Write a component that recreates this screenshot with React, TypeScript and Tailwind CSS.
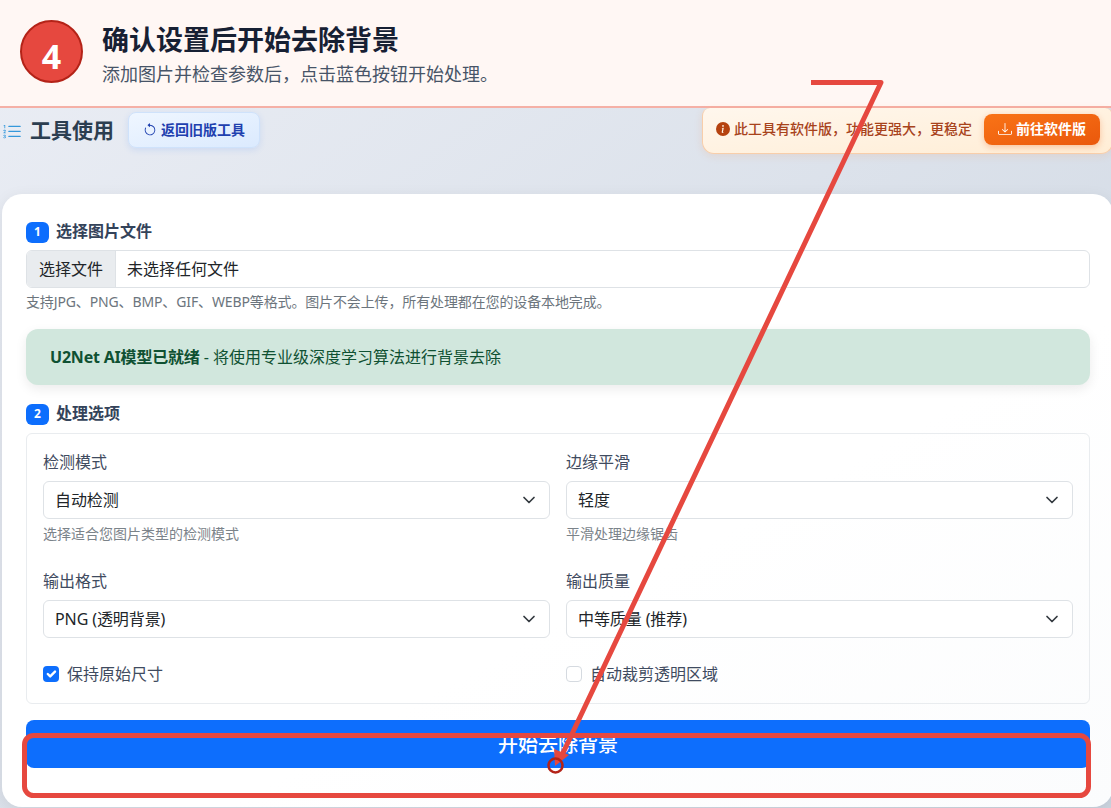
import React from 'react'
import { BsArrowCounterclockwise, BsDownload, BsInfoCircleFill, BsListOl } from 'react-icons/bs'

interface ISectionTitle {
    step: number
    text: string
}

interface ISelectField {
    label: string
    value: string
    help?: string
}

interface ICheckField {
    label: string
    checked?: boolean
}

function SectionTitle({ step, text }: ISectionTitle) {
    return (
        <h2 className="flex h-6 items-center gap-[7px] font-bold leading-6 text-[#34435a]">
            <span className="mt-0.5 flex h-[21px] w-[23px] items-center justify-center rounded-md bg-[#0d6efd] text-xs font-bold text-white">
                {step}
            </span>
            <span>{text}</span>
        </h2>
    )
}

function SelectField({ label, value, help }: ISelectField) {
    return (
        <div className="flex flex-col">
            <span className="h-6 leading-6 text-[#3f4b60]">{label}</span>
            <button
                type="button"
                className="mt-[7px] flex h-[38px] items-center justify-between rounded-md border border-[#dee2e6] bg-white pl-[11px] pr-3 text-left text-[#212529]"
            >
                <span className="tracking-[-0.1px]">{value}</span>
                <svg width="16" height="12" viewBox="0 0 16 12" fill="none">
                    <path
                        d="m3 3.5 5 5 5-5"
                        stroke="#343a40"
                        strokeWidth="1.7"
                        strokeLinecap="round"
                        strokeLinejoin="round"
                    />
                </svg>
            </button>
            {
                help && (
                    <span className="mt-1 h-[21px] text-sm leading-[21px] text-[#7b838a]">
                        {help}
                    </span>
                )
            }
        </div>
    )
}

function CheckField({ label, checked }: ICheckField) {
    return (
        <div className="flex h-6 items-center gap-2 text-[#3f4b60]">
            {
                checked
                    ? (
                        <span className="mb-px flex h-4 w-4 items-center justify-center rounded bg-[#0d6efd]">
                            <svg width="16" height="16" viewBox="0 0 20 20" fill="none">
                                <path
                                    d="m6 10 3 3 6-6"
                                    stroke="#fff"
                                    strokeWidth="3"
                                    strokeLinecap="round"
                                    strokeLinejoin="round"
                                />
                            </svg>
                        </span>
                    )
                    : <span className="mb-px h-4 w-4 rounded border border-[#d5dae0] bg-white" />
            }
            <span>{label}</span>
        </div>
    )
}

function StepHeader() {
    return (
        <header className="flex h-[108px] shrink-0 border-b-2 border-[#f5b0a6] bg-[#fff7f4] pl-5">
            <div className="mt-5 flex h-[63px] w-[63px] items-center justify-center rounded-full border-2 border-[#b42318] bg-[#e6483f] pt-2 text-[34px] font-bold leading-none text-white">
                4
            </div>
            <div className="ml-[19px] flex flex-col pt-5">
                <h1 className="h-[39px] text-[27px] font-bold leading-10 text-[#172033]">
                    确认设置后开始去除背景
                </h1>
                <p className="h-[30px] text-lg leading-[30px] text-[#475467]">
                    添加图片并检查参数后，点击蓝色按钮开始处理。
                </p>
            </div>
        </header>
    )
}

function ToolBar() {
    return (
        <div className="flex h-[86px] shrink-0 items-start justify-between">
            <div className="flex h-11 items-center pl-0.5">
                <BsListOl className="mt-1 h-5 w-5 text-[#3498db]" />
                <span className="ml-2 mt-0.5 text-[21px] font-bold text-[#2c3e50]">工具使用</span>
                <button
                    type="button"
                    className="ml-3.5 flex h-9 w-[132px] items-center justify-center gap-1 rounded-lg border border-[#cfe2fb] bg-linear-to-br from-[#eff6ff] to-[#dbeafe] text-sm font-bold text-[#1e40af] shadow-[0_2px_6px_rgba(59,130,246,0.15)]"
                >
                    <BsArrowCounterclockwise className="h-3.5 w-3.5" />
                    返回旧版工具
                </button>
            </div>
            <div className="mr-[-2px] flex h-[46px] w-[411px] items-center rounded-b-xl rounded-t-lg border border-t-0 border-[#f8ceaa] bg-linear-to-br from-[#fff7ed] to-[#ffedd5] pb-[3px] pl-[13px] pr-[12px] text-[#a8431c] shadow-[0_2px_8px_rgba(249,115,22,0.12)]">
                <BsInfoCircleFill className="h-3.5 w-3.5 text-[#b5420f]" />
                <span className="ml-1 text-sm font-medium">此工具有软件版，功能更强大，更稳定</span>
                <button
                    type="button"
                    className="ml-auto flex h-[31px] w-[116px] items-center justify-center gap-1 rounded-lg bg-linear-to-br from-[#f97316] to-[#ea580c] text-sm font-bold text-white shadow-[0_2px_6px_rgba(234,88,12,0.3)]"
                >
                    <BsDownload className="h-3.5 w-3.5" />
                    前往软件版
                </button>
            </div>
        </div>
    )
}

/* flecha y marco que señalan el boton de inicio */
function Annotation() {
    return (
        <svg
            width="1111"
            height="808"
            viewBox="0 0 1111 808"
            fill="none"
            className="pointer-events-none absolute left-0 top-0"
        >
            <rect x="24.5" y="735.5" width="1064" height="60" rx="9" stroke="#e6483f" strokeWidth="5" />
            <path d="M811 82.5H881L562 755" stroke="#e6483f" strokeWidth="5" strokeLinejoin="round" />
            <path d="M554 749 569 755 555 766Z" fill="#e6483f" />
            <circle cx="555.5" cy="765.5" r="7" stroke="#b42318" strokeWidth="2.5" />
        </svg>
    )
}

export default function App() {
    return (
        <div className="relative flex h-[808px] w-[1111px] flex-col overflow-hidden bg-linear-to-br from-[#ebeef5] to-[#ccd5e0] font-['Noto_Sans','Noto_Sans_CJK_SC',sans-serif] text-base">
            <StepHeader />
            <ToolBar />
            <main className="ml-0.5 flex h-[613px] w-[1111px] shrink-0 flex-col rounded-[20px] bg-linear-to-br from-white from-60% to-[#fbfcfd] pl-6 pr-[23px] pt-[25px] shadow-[0_4px_16px_rgba(0,0,0,0.08)]">
                <SectionTitle step={1} text="选择图片文件" />
                <div className="mt-[7px] flex h-[38px] shrink-0 overflow-hidden rounded-md border border-[#dee2e6] bg-white text-[#212529]">
                    <span className="flex w-[89px] items-center justify-center border-r border-[#dee2e6] bg-[#e9ecef]">
                        选择文件
                    </span>
                    <span className="flex items-center pl-[11px]">未选择任何文件</span>
                </div>
                <p className="mt-[3px] h-[22px] text-sm leading-[21px] tracking-[-0.13px] text-[#6c757d]">
                    支持JPG、PNG、BMP、GIF、WEBP等格式。图片不会上传，所有处理都在您的设备本地完成。
                </p>
                <div className="mt-4 flex h-14 shrink-0 items-center rounded-xl bg-[#d1e7dd] pl-6 text-[#0f5132] shadow-[0_4px_12px_rgba(0,0,0,0.08)]">
                    <p>
                        <strong className="tracking-[-0.2px]">U2Net AI模型已就绪</strong> - 将使用专业级深度学习算法进行背景去除
                    </p>
                </div>
                <div className="mt-4">
                    <SectionTitle step={2} text="处理选项" />
                </div>
                <section className="mt-2 grid h-[271px] shrink-0 grid-cols-2 grid-rows-[119px_93px_24px] gap-x-4 rounded-md border border-[#e9ecef] px-4 pt-4">
                    <SelectField label="检测模式" value="自动检测" help="选择适合您图片类型的检测模式" />
                    <SelectField label="边缘平滑" value="轻度" help="平滑处理边缘锯齿" />
                    <SelectField label="输出格式" value="PNG (透明背景)" />
                    <SelectField label="输出质量" value="中等质量 (推荐)" />
                    <CheckField label="保持原始尺寸" checked />
                    <CheckField label="自动裁剪透明区域" />
                </section>
                <button
                    type="button"
                    className="mt-4 flex h-12 shrink-0 items-center justify-center rounded-lg bg-[#0d6efd] pt-0.5 text-xl font-medium text-white"
                >
                    开始去除背景
                </button>
            </main>
            <Annotation />
        </div>
    )
}
